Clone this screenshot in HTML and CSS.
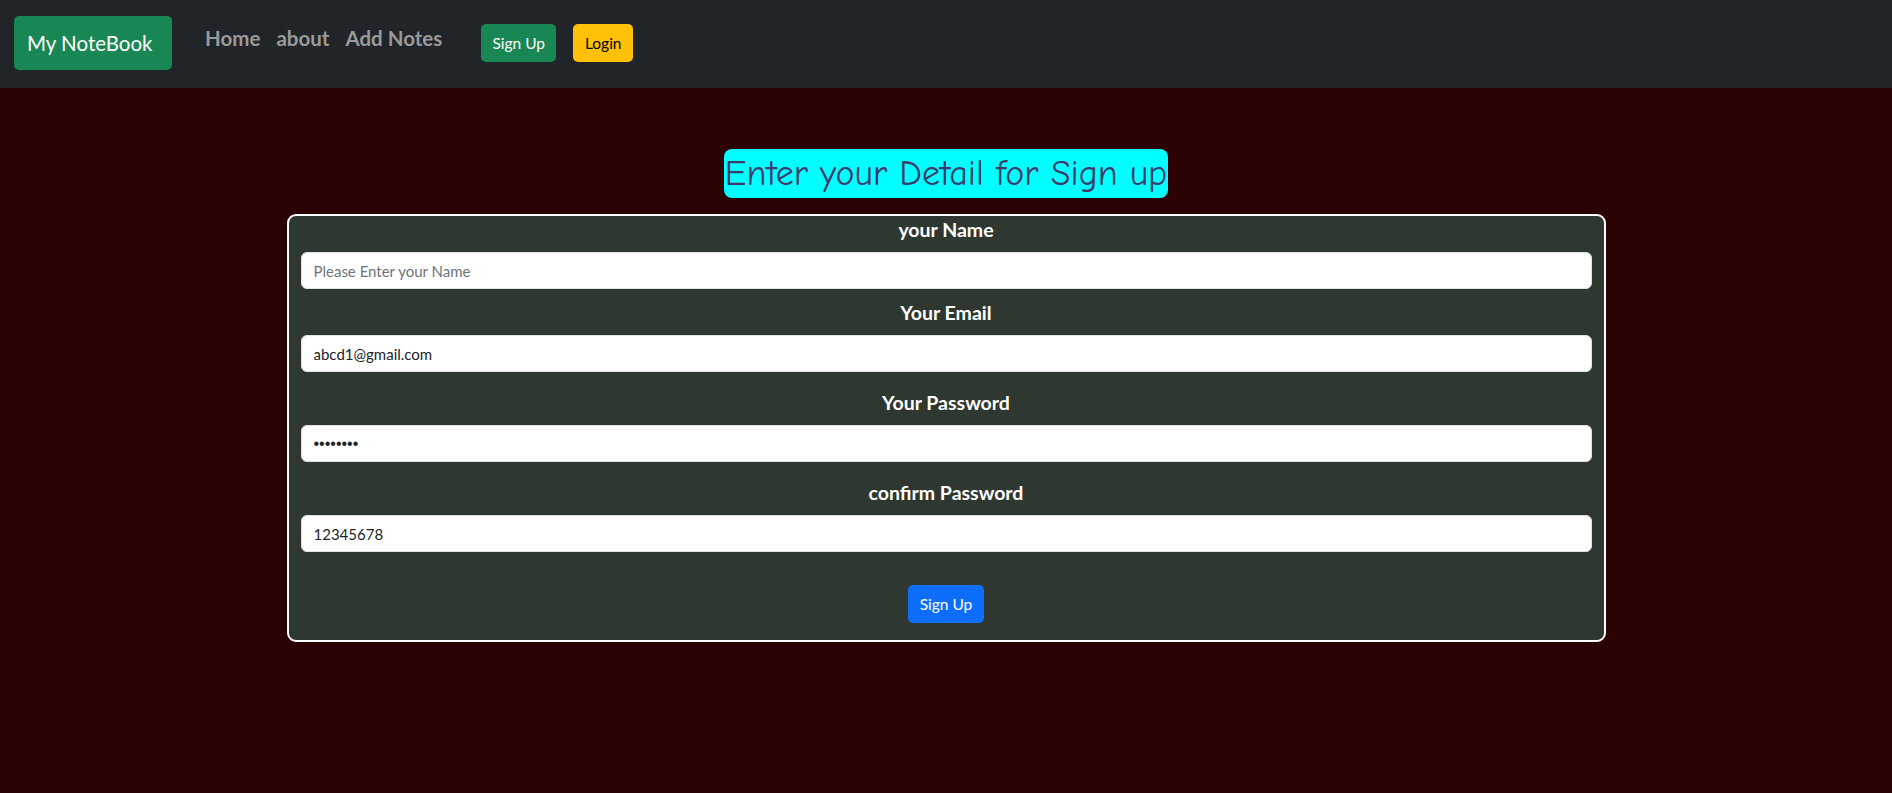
FILE: index.html
```html
<!DOCTYPE html>
<html lang="en">
<head>
<meta charset="utf-8">
<title>My NoteBook</title>
<link rel="stylesheet" href="styles.css">
</head>
<body>
<nav class="navbar">
  <a class="brand" href="#">My NoteBook</a>
  <ul class="nav-links">
    <li><a href="#">Home</a></li>
    <li><a href="#">about</a></li>
    <li><a href="#">Add Notes</a></li>
  </ul>
  <div class="nav-actions">
    <a class="btn btn-green" href="#">Sign Up</a>
    <a class="btn btn-yellow" href="#">Login</a>
  </div>
</nav>
<main class="page">
  <h2 class="title">Enter your Detail for Sign up</h2>
  <form class="card">
    <div class="field field-first">
      <label class="label" for="name">your Name</label>
      <input class="input" id="name" type="text" placeholder="Please Enter your Name">
    </div>
    <div class="field">
      <label class="label" for="email">Your Email</label>
      <input class="input" id="email" type="email" value="abcd1@gmail.com">
    </div>
    <div class="field">
      <label class="label" for="pass">Your Password</label>
      <input class="input input-pass" id="pass" type="password" value="12345678">
    </div>
    <div class="field">
      <label class="label" for="cpass">confirm Password</label>
      <input class="input" id="cpass" type="text" value="12345678">
    </div>
    <div class="actions">
      <button class="btn btn-blue" type="button">Sign Up</button>
    </div>
  </form>
</main>
</body>
</html>
```
FILE: styles.css
```css
* { box-sizing: border-box; }
html, body { margin: 0; padding: 0; }
body {
  background: #2c0304;
  font-family: Lato, "Open Sans", sans-serif;
  min-height: 793px;
}
.navbar {
  height: 88px;
  background: #212529;
  display: flex;
  align-items: center;
  padding: 0 0 0 14px;
}
.brand {
  display: flex;
  align-items: center;
  flex: none;
  width: 158px;
  height: 54px;
  padding-left: 13px;
  background: #198754;
  border-radius: 5px;
  color: #fff;
  text-decoration: none;
  font-size: 20.5px;
  white-space: nowrap;
  margin-top: -2px;
}
.nav-links {
  list-style: none;
  display: flex;
  gap: 16px;
  margin: -13px 0 0 33px;
  padding: 0;
}
.nav-links a {
  color: #9a9a9a;
  text-decoration: none;
  font-weight: bold;
  font-size: 20.5px;
  white-space: nowrap;
}
.nav-actions {
  display: flex;
  gap: 17px;
  margin-left: 39px;
  margin-top: -2px;
}
.btn {
  display: inline-flex;
  align-items: center;
  justify-content: center;
  height: 38px;
  border-radius: 5px;
  font-family: Lato, sans-serif;
  font-size: 15.5px;
  text-decoration: none;
  border: none;
  white-space: nowrap;
}
.btn-green { width: 75px; background: #198754; color: #fff; }
.btn-yellow { width: 60px; background: #ffc107; color: #000; }
.btn-blue { width: 76px; height: 38px; background: #0d6efd; color: #fff; }
.page {
  display: flex;
  flex-direction: column;
  align-items: center;
  padding-top: 61px;
}
.title {
  margin: 0 0 16px;
  height: 49px;
  width: 444px;
  display: flex;
  align-items: center;
  justify-content: center;
  background: #00ffff;
  border-radius: 8px;
  color: #3b3a6b;
  font-family: "Comic Sans MS", "Comic Neue", "DejaVu Sans", sans-serif;
  font-weight: normal;
  font-size: 36px;
  white-space: nowrap;
}
.card {
  width: 1319px;
  background: #2f3830;
  border: 2px solid #fff;
  border-radius: 9px;
  padding: 0 12px 17px;
}
.field { margin-bottom: 16px; }
.field-first { margin-bottom: 9px; }
.label {
  display: block;
  text-align: center;
  color: #fff;
  font-weight: bold;
  font-size: 19.5px;
  line-height: 28px;
  margin-bottom: 8px;
}
.field-first .label { line-height: 28px; }
.field:not(.field-first) .label { line-height: 29px; }
.input {
  display: block;
  width: 100%;
  height: 37px;
  border: 1px solid #dee2e6;
  border-radius: 6px;
  background: #fff;
  padding: 0 12px;
  font-family: Lato, sans-serif;
  font-size: 15px;
  color: #212529;
}
.input-pass { font-family: "Liberation Sans", sans-serif; font-size: 16px; }
.input::placeholder { color: #6c757d; }
.actions {
  display: flex;
  justify-content: center;
  padding-top: 17px;
}
```
